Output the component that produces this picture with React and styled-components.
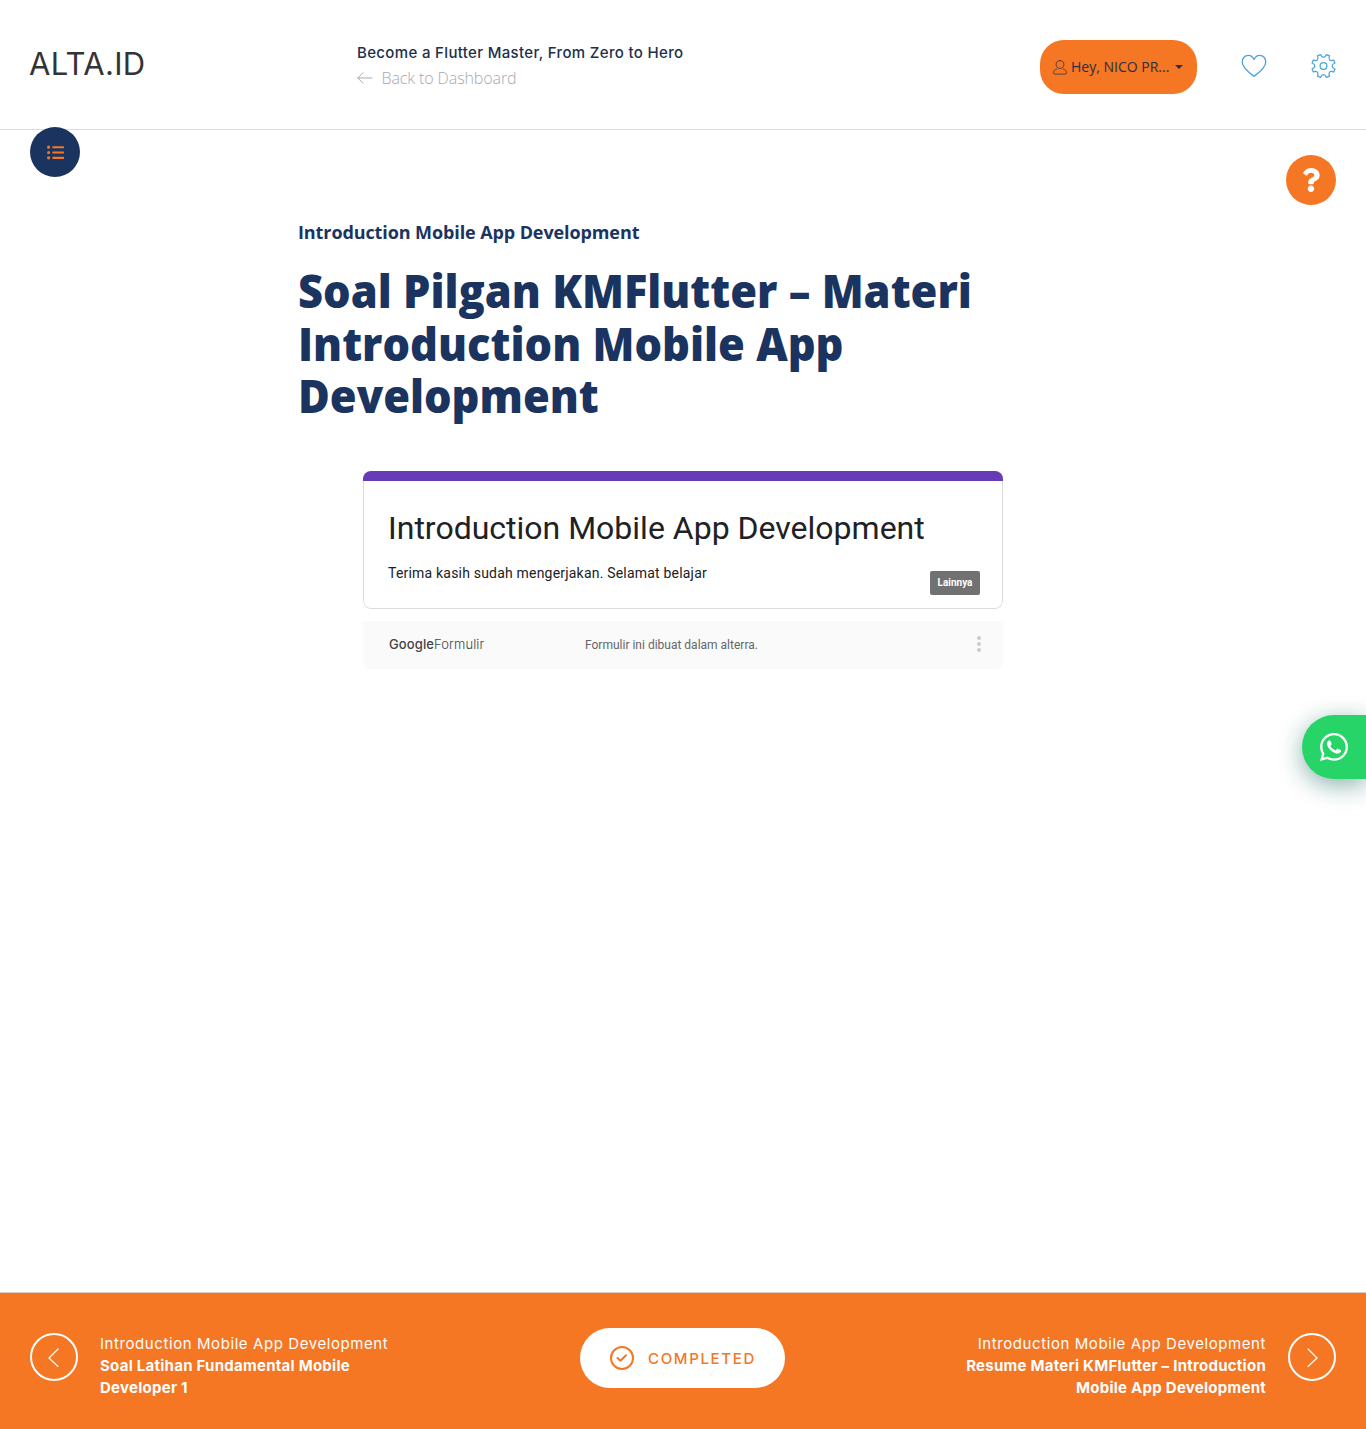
import React from "react";
import styled, { createGlobalStyle } from "styled-components";
import { FaListUl, FaQuestion, FaWhatsapp } from "react-icons/fa";

const ORANGE = "#f57623";
const NAVY = "#1a345f";

const GlobalStyle = createGlobalStyle`
  * { box-sizing: border-box; }
  body { margin: 0; background: #fff; font-family: "Open Sans", sans-serif; }
  h1, h2, h3, p { margin: 0; font-weight: inherit; }
  button { border: 0; padding: 0; font: inherit; cursor: pointer; }
  a { color: inherit; text-decoration: none; }
  svg { display: block; flex: none; }
`;

const Page = styled.div`
  position: relative;
  display: flex;
  flex-direction: column;
  min-height: 1429px;
  overflow: hidden;
`;

const Header = styled.header`
  display: flex;
  height: 130px;
  padding: 0 30px 0 29px;
  border-bottom: 1px solid #dadcdc;
`;

const Logo = styled.a`
  width: 328px;
  padding-top: 44px;
  font: 400 31px/40px Inter, sans-serif;
  letter-spacing: 0.3px;
  color: #333;
`;

const CourseInfo = styled.div`
  flex: 1;
  padding-top: 42px;
`;

const CourseTitle = styled.h3`
  font: 500 15px/22px Inter, sans-serif;
  letter-spacing: 0.34px;
  color: #20304a;
`;

const BackLink = styled.a`
  display: flex;
  align-items: center;
  gap: 8.5px;
  margin-top: 3px;
  font-size: 16px;
  font-weight: 300;
  line-height: 22px;
  letter-spacing: -0.1px;
  color: #a6a9b3;
`;

const Actions = styled.nav`
  display: flex;
  align-items: flex-start;
  padding-top: 40px;
`;

const UserButton = styled.button`
  display: flex;
  align-items: center;
  width: 157px;
  height: 54px;
  padding: 0 14px 0 13px;
  border-radius: 24px;
  background: ${ORANGE};
  color: #273044;
  font-size: 14px;
  white-space: nowrap;
`;

const UserName = styled.span`
  margin: -2px 6px 0 4px;
`;

const IconLink = styled.a`
  display: block;
  margin: ${(p) => p.$margin};
  color: #4ba3d9;
`;

const RoundButton = styled.button`
  position: absolute;
  top: ${(p) => p.$top}px;
  ${(p) => p.$side}: 30px;
  display: flex;
  align-items: center;
  justify-content: center;
  width: 50px;
  height: 50px;
  border-radius: 50%;
  background: ${(p) => p.$bg};
  color: ${(p) => p.$color};
`;

const Main = styled.main`
  flex: 1;
  width: 770px;
  margin: 0 auto;
  padding-top: 90px;
`;

const Section = styled.h2`
  font-size: 18px;
  font-weight: 700;
  line-height: 25px;
  letter-spacing: -0.1px;
  color: ${NAVY};
`;

const Title = styled.h1`
  width: 720px;
  height: 157px;
  margin-top: 19px;
  font-size: 46px;
  font-weight: 800;
  line-height: 52.5px;
  color: ${NAVY};
  transform: scaleX(0.943);
  transform-origin: left;
`;

const Form = styled.section`
  width: 640px;
  margin: 50px auto 0;
  font-family: Roboto, sans-serif;
`;

const FormCard = styled.div`
  position: relative;
  height: 138px;
  border-radius: 8px;
  overflow: hidden;
`;

const FormStripe = styled.div`
  height: 10px;
  background: #673ab7;
`;

const FormBody = styled.div`
  height: 128px;
  padding: 27px 24px 0;
  border: 1px solid #dadce0;
  border-top: 0;
  border-radius: 0 0 8px 8px;
`;

const FormTitle = styled.h2`
  font-size: 32px;
  line-height: 40px;
  color: #202124;
`;

const FormText = styled.p`
  margin-top: 15px;
  font-size: 14px;
  line-height: 20px;
  letter-spacing: 0.2px;
  color: #202124;
`;

const Tooltip = styled.span`
  position: absolute;
  right: 23px;
  bottom: 14px;
  width: 50px;
  border-radius: 2px;
  background: #717171;
  color: #fff;
  font-size: 10px;
  font-weight: 700;
  line-height: 24px;
  text-align: center;
`;

const FormFooter = styled.div`
  display: flex;
  align-items: center;
  height: 48px;
  margin-top: 12px;
  padding: 0 21px 2px 26px;
  border-radius: 0 0 8px 8px;
  background: #fafafa;
`;

const FormBrand = styled.span`
  width: 196px;
  font: 300 13px/20px Inter, sans-serif;
  letter-spacing: 0.1px;
  color: #444;
`;

const BrandStrong = styled.span`
  font-weight: 500;
`;

const FormNote = styled.span`
  flex: 1;
  padding-top: 2px;
  font-size: 12px;
  color: #666;
`;

const WhatsApp = styled.a`
  position: absolute;
  right: 0;
  top: 715px;
  display: flex;
  align-items: center;
  width: 64px;
  height: 64px;
  padding-left: 16px;
  border-radius: 32px 0 0 32px;
  background: #27d467;
  color: #fff;
  box-shadow: 0 6px 24px rgba(7, 94, 84, 0.48);
`;

const Footer = styled.footer`
  display: flex;
  justify-content: space-between;
  height: 137px;
  padding: 0 30px;
  border-top: 1px solid #d8cdc5;
  background: ${ORANGE};
  color: #fff;
  font-family: Inter, sans-serif;
`;

const LessonLink = styled.a`
  display: flex;
  flex-direction: ${(p) => (p.$next ? "row-reverse" : "row")};
  gap: 22px;
  width: 400px;
  padding-top: 40px;
  text-align: ${(p) => (p.$next ? "right" : "left")};
`;

const Circle = styled.span`
  display: flex;
  flex: none;
  align-items: center;
  justify-content: center;
  width: 48px;
  height: 48px;
  border: 2px solid #fff;
  border-radius: 50%;
`;

const LessonText = styled.span`
  font-size: 15px;
  line-height: 22px;
`;

const LessonSection = styled.span`
  display: block;
  letter-spacing: 0.58px;
`;

const LessonName = styled.strong`
  display: block;
  font-weight: 700;
  letter-spacing: 0.26px;
`;

const CompletedButton = styled.button`
  display: flex;
  align-items: center;
  gap: 14px;
  width: 205px;
  height: 60px;
  margin: 35px 1px 0 0;
  padding-left: 30px;
  border-radius: 30px;
  background: #fff;
  color: ${ORANGE};
  font-size: 15px;
  font-weight: 500;
  letter-spacing: 1.65px;
`;

const stroke = {
  fill: "none",
  stroke: "currentColor",
  strokeLinecap: "round",
  strokeLinejoin: "round",
};

const ArrowLeft = () => (
  <svg width="16" height="12" viewBox="0 0 16 12" {...stroke}>
    <path d="M15 6H.8M6 .8.8 6 6 11.2" />
  </svg>
);

const UserIcon = () => (
  <svg width="14" height="15" viewBox="0 0 14 15" {...stroke} strokeWidth="0.75">
    <path d="M7 .6c2.500 0 3.900 1.600 3.900 3.800S9.300 8.500 7 8.500 3.100 6.600 3.100 4.400 4.500.6 7 .6ZM3.800 9C1.700 9.400.6 10.700.6 12.800c0 .8.400 1.300 1.300 1.300h10.200c.9 0 1.300-.5 1.300-1.300 0-2.100-1.100-3.400-3.200-3.800" />
  </svg>
);

const HeartIcon = () => (
  <svg width="26" height="24" viewBox="0 0 26 24" {...stroke} strokeWidth="1.3">
    <path d="M13 22.300C10.200 20.200 1.200 13.600 1.200 7.900 1.200 4.200 3.900 1.400 7.200 1.400c2.700 0 4.600 1.500 5.800 4 1.200-2.500 3.100-4 5.800-4 3.300 0 6 2.800 6 6.500 0 5.700-9 12.300-11.800 14.400Z" />
  </svg>
);

const polar = (r, deg) => {
  const a = (deg * Math.PI) / 180;
  return `${(r * Math.cos(a)).toFixed(2)} ${(r * Math.sin(a)).toFixed(2)}`;
};

const gearPath =
  Array.from({ length: 8 }, (_, i) => {
    const a = i * 45 + 22.5;
    return `${i ? "L" : "M"}${polar(12.3, a - 8)}L${polar(12.3, a + 8)}C${polar(8.2, a + 12)} ${polar(8.2, a + 33)} ${polar(12.3, a + 37)}`;
  }).join("") + "Z";

const GearIcon = () => (
  <svg width="25" height="26" viewBox="-13 -13 26 26" {...stroke} strokeWidth="1.3">
    <circle r="3.500" />
    <path d={gearPath} />
  </svg>
);

const Chevron = ({ next }) => (
  <svg width="12" height="20" viewBox="0 0 12 20" {...stroke} strokeWidth="1.200">
    <path d={next ? "M2 2 11 11 2 19.500" : "M10 2 1 11 10 19.500"} />
  </svg>
);

const CheckCircle = () => (
  <svg width="24" height="24" viewBox="0 0 24 24" {...stroke} strokeWidth="2">
    <circle cx="12" cy="12" r="11" />
    <path d="m7.500 12 3 2.700 5.500-5.500" />
  </svg>
);

const Caret = () => (
  <svg width="8" height="4" viewBox="0 0 8 4" fill="currentColor">
    <path d="M0 0h8L4 4Z" />
  </svg>
);

const MoreDots = () => (
  <svg width="6" height="18" viewBox="0 0 6 18" fill="#ccc">
    <circle cx="3" cy="3" r="2" />
    <circle cx="3" cy="9" r="2" />
    <circle cx="3" cy="15" r="2" />
  </svg>
);

export default function App() {
  return (
    <Page>
      <GlobalStyle />
      <Header>
        <Logo href="#">ALTA.ID</Logo>
        <CourseInfo>
          <CourseTitle>Become a Flutter Master, From Zero to Hero</CourseTitle>
          <BackLink href="#">
            <ArrowLeft />
            Back to Dashboard
          </BackLink>
        </CourseInfo>
        <Actions>
          <UserButton>
            <UserIcon />
            <UserName>Hey, NICO PR...</UserName>
            <Caret />
          </UserButton>
          <IconLink href="#" $margin="14px 44px 0"><HeartIcon /></IconLink>
          <IconLink href="#" $margin="13px 0 0"><GearIcon /></IconLink>
        </Actions>
      </Header>
      <RoundButton $side="left" $top={127} $bg={NAVY} $color={ORANGE}>
        <FaListUl size={17} />
      </RoundButton>
      <RoundButton $side="right" $top={155} $bg={ORANGE} $color="#fff">
        <FaQuestion size={24} />
      </RoundButton>

      <Main>
        <Section>Introduction Mobile App Development</Section>
        <Title>Soal Pilgan KMFlutter – Materi Introduction Mobile App Development</Title>
        <Form>
          <FormCard>
            <FormStripe />
            <FormBody>
              <FormTitle>Introduction Mobile App Development</FormTitle>
              <FormText>Terima kasih sudah mengerjakan. Selamat belajar</FormText>
            </FormBody>
            <Tooltip>Lainnya</Tooltip>
          </FormCard>
          <FormFooter>
            <FormBrand>
              <BrandStrong>Google</BrandStrong>Formulir
            </FormBrand>
            <FormNote>Formulir ini dibuat dalam alterra.</FormNote>
            <MoreDots />
          </FormFooter>
        </Form>
      </Main>

      <WhatsApp href="#"><FaWhatsapp size={32} /></WhatsApp>

      <Footer>
        <LessonLink href="#">
          <Circle><Chevron /></Circle>
          <LessonText>
            <LessonSection>Introduction Mobile App Development</LessonSection>
            <LessonName>Soal Latihan Fundamental Mobile<br />Developer 1</LessonName>
          </LessonText>
        </LessonLink>
        <CompletedButton>
          <CheckCircle />
          COMPLETED
        </CompletedButton>
        <LessonLink href="#" $next>
          <Circle><Chevron next /></Circle>
          <LessonText>
            <LessonSection>Introduction Mobile App Development</LessonSection>
            <LessonName>Resume Materi KMFlutter – Introduction<br />Mobile App Development</LessonName>
          </LessonText>
        </LessonLink>
      </Footer>
    </Page>
  );
}
